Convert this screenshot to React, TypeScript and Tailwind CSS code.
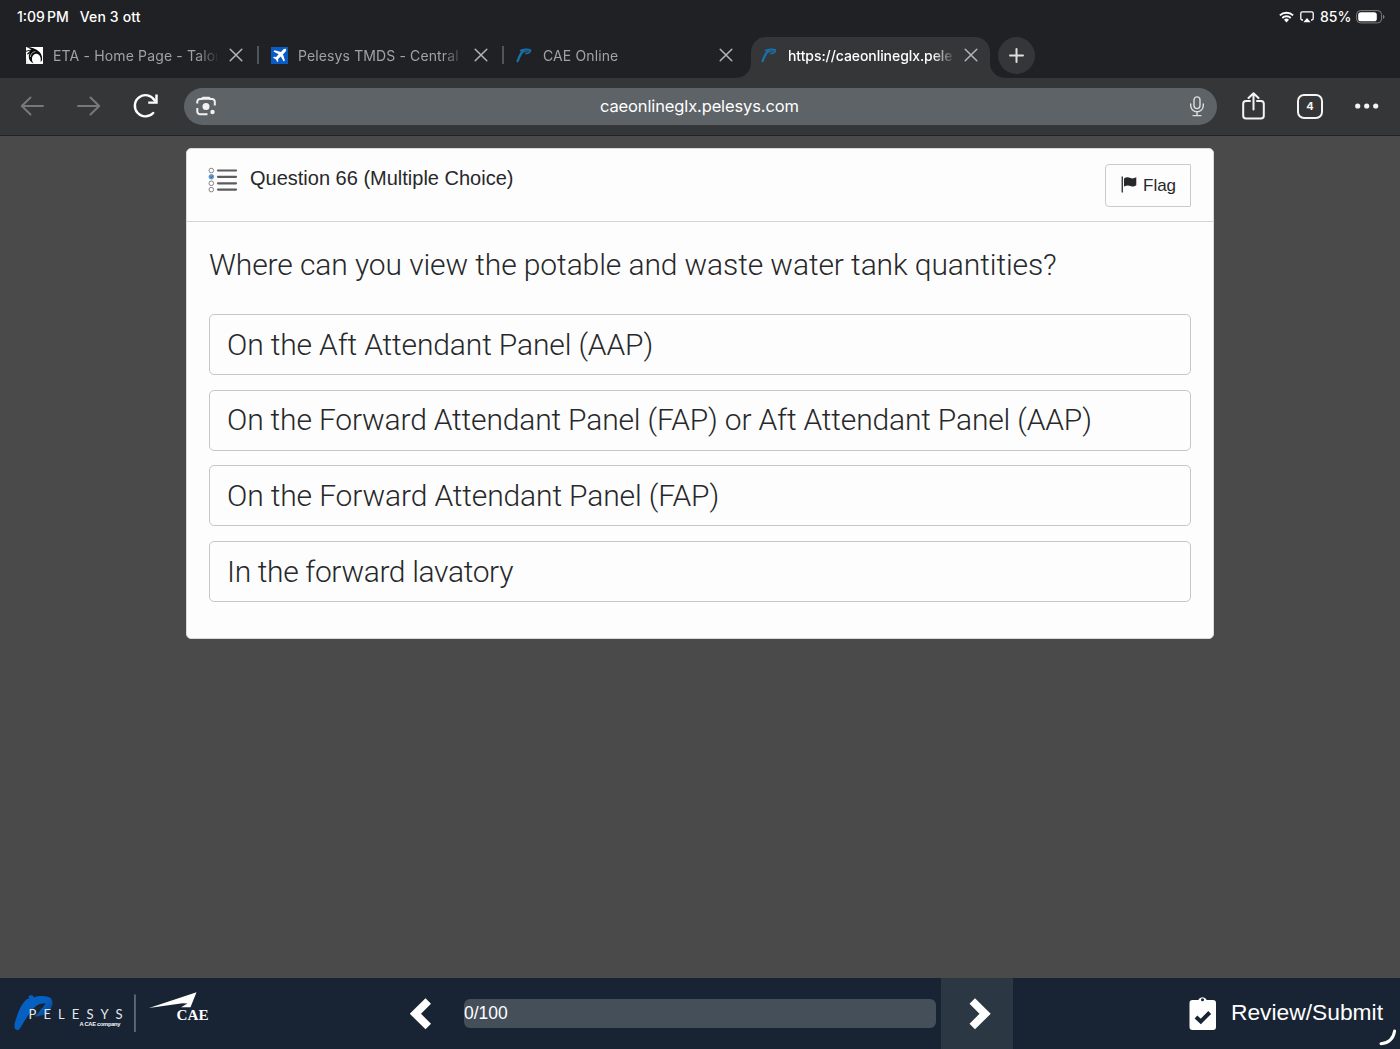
import type { ReactNode } from "react";

const options = [
  { text: "On the Aft Attendant Panel (AAP)", spacing: "tracking-[-0.14px]" },
  {
    text: "On the Forward Attendant Panel (FAP) or Aft Attendant Panel (AAP)",
    spacing: "tracking-[-0.17px]",
  },
  { text: "On the Forward Attendant Panel (FAP)", spacing: "tracking-[-0.13px]" },
  { text: "In the forward lavatory", spacing: "tracking-[-0.35px]" },
];

function WifiIcon() {
  return (
    <svg width="15" height="12" viewBox="0 0 15 12" fill="none" stroke="#fff" strokeWidth="1.9">
      <path d="M0.9 4.4 A9.4 9.4 0 0 1 14.1 4.4" />
      <path d="M3.3 7 A6 6 0 0 1 11.7 7" />
      <path d="M5 8.8 A3.6 3.6 0 0 1 10 8.8 L7.5 11.4 Z" fill="#fff" stroke="none" />
    </svg>
  );
}

function AirplayIcon() {
  return (
    <svg width="14" height="12" viewBox="0 0 14 12" fill="none">
      <path
        d="M3 9 H2.2 A1.4 1.4 0 0 1 0.8 7.600 V2.200 A1.4 1.4 0 0 1 2.200 0.800 H11.800 A1.400 1.400 0 0 1 13.200 2.200 V7.600 A1.400 1.400 0 0 1 11.800 9 H11"
        stroke="#fff"
        strokeWidth="1.3"
      />
      <path d="M7 7 L10.600 11.300 H3.400 Z" fill="#fff" />
    </svg>
  );
}

function BatteryIcon() {
  return (
    <svg width="29" height="14" viewBox="0 0 29 14" fill="none">
      <rect x="0.6" y="0.6" width="25" height="12.300" rx="4" stroke="#7d7e80" />
      <rect x="2.200" y="2.200" width="18.600" height="9.100" rx="2.600" fill="#fff" />
      <path d="M27 4.700 Q28.500 5.500 28.500 6.800 Q28.500 8.100 27 8.900 Z" fill="#7d7e80" />
    </svg>
  );
}

function EtaIcon() {
  return (
    <svg width="17" height="17" viewBox="0 0 17 17">
      <rect width="17" height="17" fill="#fff" />
      <path d="M0.500 0 C5 0 10 1.500 13.500 5 C15.500 7 16.500 10 16 13.500 L14.500 15 C15.500 11 14 8 11.500 7 C9 6.300 6.500 8 6 11 C5.800 13.500 6.500 15 7.500 16.500 C4 15 2.500 12 2.800 9 C2.900 7.500 3.500 6 4.500 5 L1.800 7.800 L1 6.800 L4.500 3.500 L0 4.800 V3.800 L5.500 2.400 Z" fill="#0b0b0c" />
      <path d="M4.300 10 C4.500 7 6.500 4.800 9.500 4.600" stroke="#fff" strokeWidth="0.600" fill="none" />
      <path d="M0 11 C1 14 2.500 16 4.500 17 H0 Z" fill="#e6e6e6" />
    </svg>
  );
}

function PlaneIcon() {
  return (
    <svg width="17" height="17" viewBox="0 0 17 17">
      <rect width="17" height="17" fill="#0a5cc4" />
      <path
        d="M14.900 2.100 C15.700 2.900 15 4.200 14.200 5 L12 7.200 L13.900 13.400 L12.700 14.500 L9.800 9.500 L7.100 12 L7.300 14.200 L6.300 15.100 L4.800 12.300 L2 10.800 L2.900 9.800 L5.100 10 L7.600 7.300 L2.500 4.400 L3.600 3.200 L9.900 5 L12 2.800 C12.800 2 14.100 1.300 14.900 2.100 Z"
        fill="#fff"
      />
    </svg>
  );
}

function PelesysIcon() {
  return (
    <svg width="17" height="17" viewBox="0 0 17 17" fill="none" stroke="#1a70a8" strokeLinecap="round">
      <path d="M1.600 14.200 C3.200 9.500 4.800 6 7.400 3.600" strokeWidth="2.300" />
      <path d="M4.500 3.500 C7 2.600 12 1.900 14.400 3 C15.400 4.600 12.500 6.400 9.800 6.600" strokeWidth="1.500" />
      <path d="M7.500 4.900 C9.500 4 11.500 3.700 13.500 4" strokeWidth="1.200" />
    </svg>
  );
}

function CloseIcon() {
  return (
    <svg className="shrink-0" width="14" height="14" viewBox="0 0 14 14" fill="none" stroke="#b2b4b7" strokeWidth="1.500" strokeLinecap="round">
      <path d="M1.200 1.200 L12.800 12.800 M12.800 1.200 L1.200 12.800" />
    </svg>
  );
}

function Tab({ icon, title, active, divider, spacing }: { icon: ReactNode; title: string; active?: boolean; divider?: boolean; spacing: string }) {
  return (
    <div
      className={
        active
          ? "relative flex h-[41px] w-[239px] items-center rounded-t-[15px] bg-[#353638] pb-[5px] pl-[10px] text-white"
          : "flex h-[41px] w-[245px] items-center pb-[5px] pl-[10px] text-[#9fa2a6]"
      }
    >
      {active && (
        <>
          <svg className="absolute bottom-0 -left-[15px]" width="15" height="15" viewBox="0 0 15 15">
            <path d="M15 0 A15 15 0 0 1 0 15 H15 Z" fill="#353638" />
          </svg>
          <svg className="absolute -right-[15px] bottom-0" width="15" height="15" viewBox="0 0 15 15">
            <path d="M0 0 A15 15 0 0 0 15 15 H0 Z" fill="#353638" />
          </svg>
        </>
      )}
      <span className="w-[27px] shrink-0">{icon}</span>
      <span
        className={`mr-[12px] w-[164px] shrink-0 overflow-hidden pt-px text-[14px] leading-5 whitespace-nowrap [mask-image:linear-gradient(to_right,#000_88%,transparent_102%)] ${spacing} ${active ? "font-medium" : ""}`}
      >
        {title}
      </span>
      <CloseIcon />
      {divider && <span className="ml-[14px] h-[18px] w-[2px] shrink-0 bg-[#4f555b]" />}
    </div>
  );
}

function StatusBar() {
  return (
    <div className="flex h-[37px] items-start justify-between pt-[7px] pr-[15px] pl-[17px] text-[14px] leading-5 font-medium">
      <div className="flex gap-[11px]">
        <span>
          1:09<span className="ml-[2px]">PM</span>
        </span>
        <span className="tracking-[0.15px]">Ven 3 ott</span>
      </div>
      <div className="flex items-center">
        <WifiIcon />
        <span className="ml-[6px]">
          <AirplayIcon />
        </span>
        <span className="ml-[6px] w-[36px]">85%</span>
        <BatteryIcon />
      </div>
    </div>
  );
}

function Toolbar() {
  return (
    <div className="flex h-[58px] items-center border-b border-[#222325] bg-[#353638] pb-px">
      <svg className="ml-[20px]" width="24" height="20" viewBox="0 0 24 20" fill="none" stroke="#77787a" strokeWidth="2" strokeLinecap="round" strokeLinejoin="round">
        <path d="M23 10 H2 M10.500 1.500 L1.800 10 L10.500 18.500" />
      </svg>
      <svg className="ml-[33px]" width="24" height="20" viewBox="0 0 24 20" fill="none" stroke="#77787a" strokeWidth="2" strokeLinecap="round" strokeLinejoin="round">
        <path d="M1 10 H22 M13.500 1.500 L22.200 10 L13.500 18.500" />
      </svg>
      <svg className="ml-[32px]" width="26" height="26" viewBox="0 0 26 26" fill="none" stroke="#fff" strokeWidth="2.400">
        <path d="M20.200 20 A10.600 10.600 0 1 1 21.600 7.400" strokeLinecap="round" />
        <path d="M23.500 1.500 V9.600 H15.200" strokeLinejoin="miter" />
      </svg>
      <div className="ml-[25px] flex h-[37px] w-[1033px] items-center rounded-full bg-[#5e6367] pr-[12px] pl-[12px]">
        <svg width="21" height="20" viewBox="0 0 21 20" fill="none" stroke="#f1f1f1" strokeWidth="2">
          <path d="M1.300 7.500 V5.800 A2.800 2.800 0 0 1 4.100 3 H5.500 L7 1.700 H13 L14.500 3 H16 A2.800 2.800 0 0 1 18.800 5.800 V9.500" />
          <path d="M1.300 12 V15.200 A2.800 2.800 0 0 0 4.100 18.200 H11.500" />
          <path d="M7 1 H13 L14.500 3.800 H5.500 Z" fill="#f1f1f1" stroke="none" />
          <circle cx="10" cy="10.600" r="3.500" fill="#f1f1f1" stroke="none" />
          <circle cx="16.500" cy="16" r="2.200" fill="#f1f1f1" stroke="none" />
        </svg>
        <span className="ml-[383px] pb-px text-[16.500px] leading-6 tracking-[-0.13px] text-white">caeonlineglx.pelesys.com</span>
        <svg className="ml-auto" width="15" height="21" viewBox="0 0 15 21" fill="none" stroke="#dcddde" strokeWidth="1.400" strokeLinecap="round">
          <rect x="4" y="0.900" width="6" height="11.700" rx="3" />
          <path d="M0.700 8 V9.500 A6.300 6.200 0 0 0 13.300 9.500 V8 M7 15.800 V19.400 M3 19.600 H11" />
        </svg>
      </div>
      <svg className="ml-[25px]" width="23" height="28" viewBox="0 0 23 28" fill="none" stroke="#f4f4f4" strokeWidth="2" strokeLinecap="round" strokeLinejoin="round">
        <path d="M8 9 H4 A2.800 2.800 0 0 0 1.200 11.800 V23.800 A2.800 2.800 0 0 0 4 26.600 H19 A2.800 2.800 0 0 0 21.800 23.800 V11.800 A2.800 2.800 0 0 0 19 9 H15" />
        <path d="M11.500 17.500 V1.500 M6.500 6 L11.500 1.200 L16.500 6" />
      </svg>
      <div className="ml-[32px] flex h-[25px] w-[26px] items-center justify-center rounded-[7px] border-2 border-[#f4f4f4] text-[11px] leading-none font-bold text-[#f4f4f4]">4</div>
      <svg className="ml-[32px]" width="24" height="6" viewBox="0 0 24 6" fill="#f4f4f4">
        <circle cx="2.700" cy="3" r="2.600" />
        <circle cx="11.700" cy="3" r="2.600" />
        <circle cx="20.700" cy="3" r="2.600" />
      </svg>
    </div>
  );
}

function ListIcon() {
  return (
    <svg width="30" height="26" viewBox="0 0 30 26" fill="none">
      {[3.500, 9.800, 16.300, 22.600].map((y, i) => (
        <g key={y}>
          <circle cx="3.300" cy={y} r="2.300" fill={i === 1 ? "#5c9de0" : "#fff"} stroke={i === 1 ? "#6d8db4" : "#777"} strokeWidth="0.900" />
          <path d={`M10 ${y} H28`} stroke="#5c5c5e" strokeWidth="2.200" strokeLinecap="round" />
        </g>
      ))}
      <path d="M2.200 9.600 L3.200 10.800 L5 8.600" stroke="#1c5eaa" strokeWidth="0.900" />
    </svg>
  );
}

function QuestionCard() {
  return (
    <section className="mx-auto mt-[12px] h-[491px] w-[1028px] rounded-[5px] border border-[#d9d9d9] bg-[#fdfdfd] font-['Liberation_Sans',sans-serif] text-[#27282a]">
      <header className="flex h-[73px] items-start border-b border-[#d4d4d4] pl-[21px]">
        <div className="mt-[18px]">
          <ListIcon />
        </div>
        <h1 className="mt-[17px] ml-[12px] text-[20px] leading-6">Question 66 (Multiple Choice)</h1>
        <button className="mt-[15px] mr-[22px] ml-auto flex h-[43px] w-[86px] items-center rounded-l-[4px] rounded-r-[1px] border border-[#cbcbcb] pl-[15px] text-[17px]">
          <svg className="mb-[2px]" width="16" height="17" viewBox="0 0 16 17" fill="#27282a">
            <rect x="0.600" y="0.500" width="1.300" height="16" />
            <path d="M3 2.400 C5.500 0.800 7.500 1.200 9.500 2.100 C11.500 2.900 13.300 2.300 15.300 1.300 V9.300 C13.300 10.600 11.500 10.900 9.500 10 C7.500 9.100 5.500 9.200 3 10.600 Z" />
          </svg>
          <span className="ml-[6px]">Flag</span>
        </button>
      </header>
      <div className="px-[22px] pt-[23px] font-[Roboto,sans-serif] text-[30px] font-light">
        <h2 className="leading-[40px] tracking-[-0.1px]">Where can you view the potable and waste water tank quantities?</h2>
        <ul className="mt-[29px] flex flex-col gap-[14.700px]">
          {options.map((o) => (
            <li key={o.text} className={`flex h-[61px] items-center rounded-[5px] border border-[#c6c6c6] pl-[17px] leading-[40px] ${o.spacing}`}>
              {o.text}
            </li>
          ))}
        </ul>
      </div>
    </section>
  );
}

function Logos() {
  return (
    <svg width="215" height="71" viewBox="0 0 215 71">
      <defs>
        <linearGradient id="swoosh" x1="0" y1="0" x2="1" y2="1">
          <stop offset="0.500" stopColor="#0660c2" />
          <stop offset="0.780" stopColor="#0a3f80" />
        </linearGradient>
      </defs>
      <path d="M14.500 46 C18 34 21 26 27 21 L29 20.500 L28.500 18.300 C31 16.700 33 17 34 19.500 C39 17.500 47 17.500 51 20.500 C54.500 25 51.500 32 46 35.500 C43 37.500 38 38.700 34.500 38.300 C37.500 36 40 33.500 41 31 C43 29.500 45.500 26.500 45.500 25.200 C42 25 38 26 35.500 28.500 C30 33.500 25 42 20 50.500 C18.500 53 15.500 52.500 14.500 49.500 Z" fill="url(#swoosh)" />
      <text x="28.500" y="40.800" fill="#e4e8ee" fontFamily="Lato, sans-serif" fontSize="13" textLength="94">PELESYS</text>
      <text x="79.500" y="48.300" fill="#f2f3f5" fontFamily="Liberation Sans, sans-serif" fontSize="5.800" fontWeight="700" textLength="41">A CAE company</text>
      <rect x="134.300" y="16.500" width="1.300" height="37.500" fill="#7f8791" />
      <path d="M149 30 L196.500 14.300 L190.500 29.200 L181 29.200 L187.500 25.500 L182.500 25.300 Z" fill="#fff" />
      <text x="176.500" y="42" fill="#fff" fontFamily="Liberation Serif, serif" fontSize="15.500" fontWeight="700" textLength="32" lengthAdjust="spacingAndGlyphs">CAE</text>
    </svg>
  );
}

function Footer() {
  return (
    <footer className="relative flex h-[71px] items-center overflow-hidden bg-[#182433] font-['Liberation_Sans',sans-serif] text-white">
      <Logos />
      <svg className="ml-[195px]" width="22" height="32" viewBox="0 0 22 32" fill="#fff">
        <path d="M15.500 0.300 L21 5.800 L11 15.800 L21 25.800 L15.500 31.300 L-0.200 15.800 Z" />
      </svg>
      <div className="ml-[32px] flex h-[29px] w-[472px] items-center rounded-[6px] bg-[#454f5a] text-[17.500px]">0/100</div>
      <button className="ml-[5px] flex h-full w-[72px] items-center justify-center bg-[#2c3744] pl-[5px]">
        <svg width="22" height="32" viewBox="0 0 22 32" fill="#fff">
          <path d="M6 0.300 L0.500 5.800 L10.500 15.800 L0.500 25.800 L6 31.300 L21.700 15.800 Z" />
        </svg>
      </button>
      <div className="ml-auto flex items-center pr-[17px] pb-[2px]">
        <svg width="28" height="36" viewBox="0 0 28 36">
          <path d="M3.500 5 H9.200 A4.800 4.800 0 0 1 17.800 5 H24 A3 3 0 0 1 27 8 V32 A3 3 0 0 1 24 35 H3.500 A3 3 0 0 1 0.500 32 V8 A3 3 0 0 1 3.500 5 Z" fill="#fff" />
          <circle cx="13.500" cy="4.800" r="1.500" fill="#182433" />
          <path d="M7 22 L11.800 26.500 L20.700 17.500" stroke="#182433" strokeWidth="4" fill="none" />
        </svg>
        <span className="ml-[14px] pb-px text-[22.800px] leading-7">Review/Submit</span>
      </div>
      <svg className="absolute right-[3px] bottom-[3px]" width="18" height="18" viewBox="0 0 18 18" fill="none">
        <path d="M2 15.700 C9.500 15 14.500 10.500 15.600 3" stroke="#fff" strokeWidth="3" strokeLinecap="round" />
      </svg>
    </footer>
  );
}

export default function App() {
  return (
    <div className="flex h-[1049px] w-[1400px] flex-col bg-[#4a4a4a] font-[Inter,sans-serif]">
      <div className="h-[78px] shrink-0 bg-[#202124] text-white">
        <StatusBar />
        <div className="flex h-[41px] pl-[16px]">
          <Tab icon={<EtaIcon />} title="ETA - Home Page - Talon" divider spacing="tracking-[0.15px]" />
          <Tab icon={<PlaneIcon />} title="Pelesys TMDS - Central" divider spacing="tracking-[0.12px]" />
          <Tab icon={<PelesysIcon />} title="CAE Online" spacing="tracking-[0.12px]" />
          <Tab icon={<PelesysIcon />} title="https://caeonlineglx.pelesys" active spacing="tracking-[-0.07px]" />
          <button className="ml-[8px] flex size-[37px] items-center justify-center rounded-full bg-[#353638]">
            <svg width="15" height="15" viewBox="0 0 15 15" stroke="#dedfe0" strokeWidth="2" strokeLinecap="round">
              <path d="M7.500 1 V14 M1 7.500 H14" />
            </svg>
          </button>
        </div>
      </div>
      <Toolbar />
      <main className="flex-1">
        <QuestionCard />
      </main>
      <Footer />
    </div>
  );
}
